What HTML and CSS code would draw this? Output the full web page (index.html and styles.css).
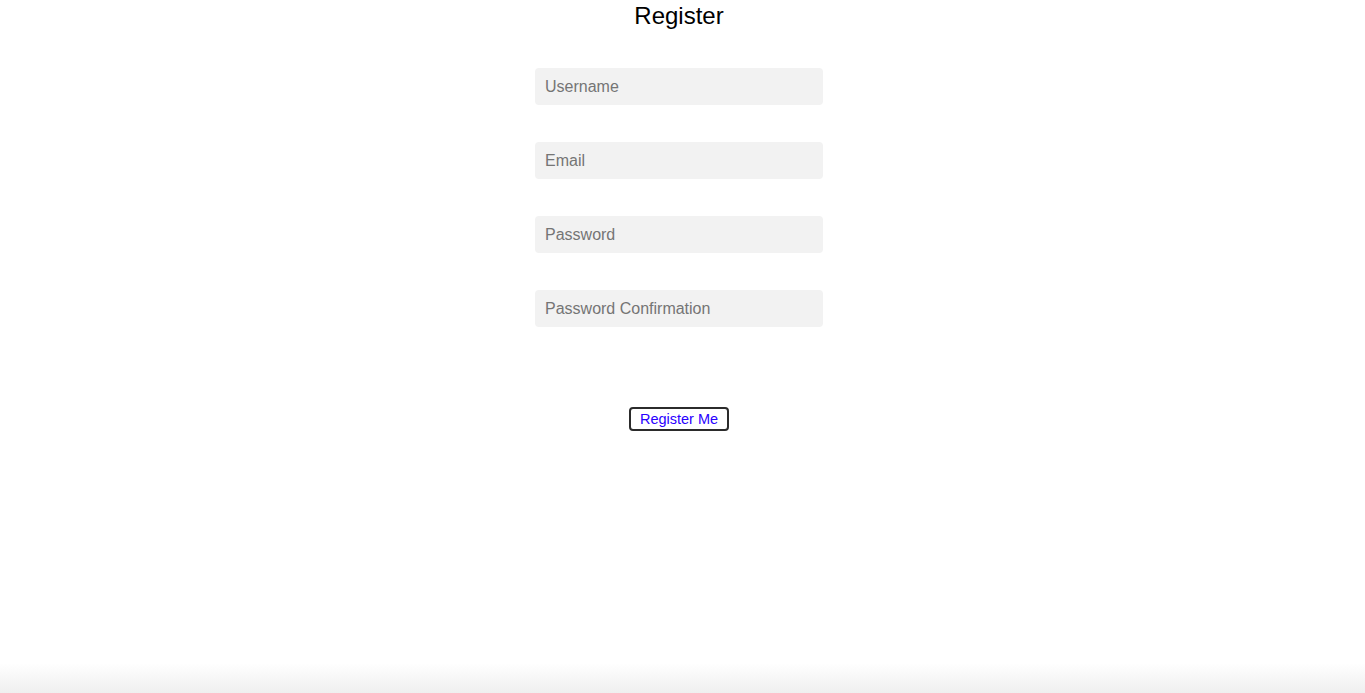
FILE: index.html
```html
<!DOCTYPE html>
<html>
<head>
<meta charset="utf-8">
<title>Register</title>
<link rel="stylesheet" href="styles.css">
</head>
<body>
<main class="page">
  <h1 class="title">Register</h1>
  <form class="form">
    <div class="fields">
      <input class="field" type="text" placeholder="Username">
      <input class="field" type="email" placeholder="Email">
      <input class="field" type="password" placeholder="Password">
      <input class="field" type="password" placeholder="Password Confirmation">
    </div>
    <button class="submit" type="button">Register Me</button>
  </form>
</main>
<div class="fade"></div>
</body>
</html>
```
FILE: styles.css
```css
html, body {
  margin: 0;
  padding: 0;
  background: #ffffff;
  height: 100%;
  overflow: hidden;
}
body {
  font-family: "Liberation Sans", Arial, sans-serif;
  position: relative;
}
.page {
  display: flex;
  flex-direction: column;
  align-items: center;
  padding-right: 7px;
}
.title {
  margin: 0;
  font-size: 24px;
  font-weight: normal;
  line-height: 32px;
  color: #000;
}
.form {
  display: flex;
  flex-direction: column;
  align-items: center;
  margin-top: 36px;
}
.fields {
  display: flex;
  flex-direction: column;
  gap: 37px;
}
.field {
  box-sizing: border-box;
  width: 288px;
  height: 37px;
  border: none;
  border-radius: 4px;
  background: #f2f2f2;
  padding: 0 10px;
  font-family: "Liberation Sans", Arial, sans-serif;
  font-size: 16px;
  color: #333;
  outline: none;
}
.field::placeholder {
  color: #757575;
}
.submit {
  margin-top: 80px;
  box-sizing: border-box;
  width: 100px;
  height: 24px;
  border: 2px solid #2b2b2b;
  border-radius: 4px;
  background: #fff;
  color: #2a00ff;
  font-family: "Liberation Sans", Arial, sans-serif;
  font-size: 14.5px;
  padding: 0;
  line-height: 18px;
}
.fade {
  position: absolute;
  left: 0;
  right: 0;
  bottom: 0;
  height: 30px;
  background: linear-gradient(to bottom, rgba(240,240,240,0), #efefef);
}
```
